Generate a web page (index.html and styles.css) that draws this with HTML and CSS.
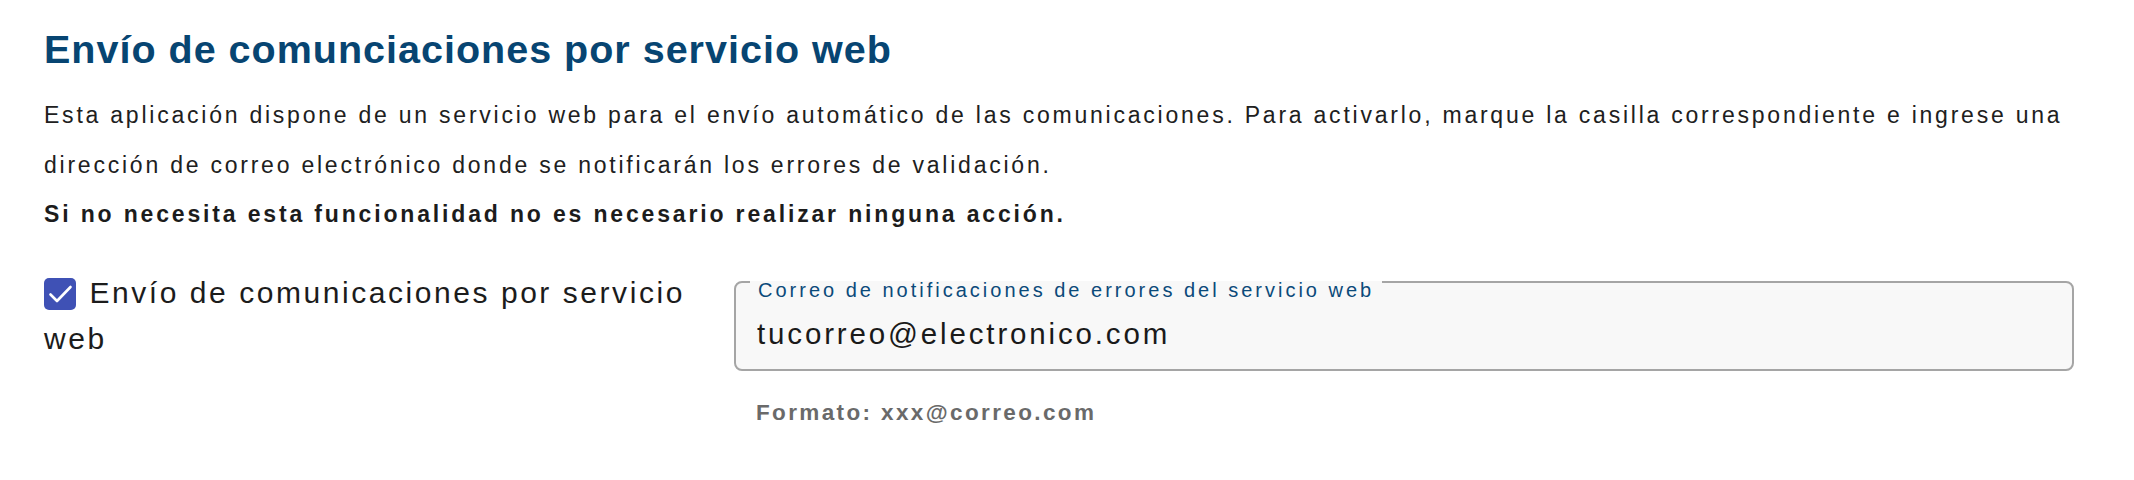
FILE: index.html
```html
<!DOCTYPE html>
<html lang="es">
<head>
<meta charset="utf-8">
<title>Envío de comunicaciones por servicio web</title>
<link rel="stylesheet" href="styles.css">
</head>
<body>
<main class="page">
  <h2 class="title">Envío de comunciaciones por servicio web</h2>
  <p class="intro">Esta aplicación dispone de un servicio web para el envío automático de las comunicaciones. Para activarlo, marque la casilla correspondiente e ingrese una dirección de correo electrónico donde se notificarán los errores de validación.</p>
  <p class="intro intro-strong">Si no necesita esta funcionalidad no es necesario realizar ninguna acción.</p>

  <section class="setting">
    <label class="check-label"><span class="checkbox" role="checkbox" aria-checked="true"><svg viewBox="0 0 32 32" width="32" height="32" aria-hidden="true"><path d="M6.5 16.5 L13 23 L26.5 9" fill="none" stroke="#ffffff" stroke-width="2.6" stroke-linecap="round" stroke-linejoin="round"/></svg></span>Envío de comunicaciones por servicio web</label>

    <div class="field-col">
      <fieldset class="field">
        <legend class="field-legend">Correo de notificaciones de errores del servicio web</legend>
        <input class="field-input" type="email" value="tucorreo@electronico.com">
      </fieldset>
      <div class="hint">Formato: xxx@correo.com</div>
    </div>
  </section>
</main>
</body>
</html>
```
FILE: styles.css
```css
html, body {
  margin: 0;
  padding: 0;
  background: #ffffff;
}

.page {
  padding: 25px 60px 0 44px;
  font-family: "Liberation Sans", Arial, sans-serif;
  color: #222222;
}

.title {
  margin: 0;
  font-size: 39.5px;
  line-height: 48px;
  font-weight: 700;
  letter-spacing: 1px;
  color: #074572;
}

.intro {
  margin: 0;
  font-size: 23px;
  line-height: 49.5px;
  letter-spacing: 2.77px;
  color: #202020;
}

.title + .intro {
  margin-top: 18px;
}

.intro-strong {
  font-weight: 700;
  letter-spacing: 2.84px;
  color: #1c1c1c;
}

.setting {
  display: grid;
  grid-template-columns: 660px 1fr;
  column-gap: 30px;
  margin-top: 23.5px;
  align-items: start;
}

.check-label {
  display: block;
  padding-top: 7px;
  font-size: 30px;
  line-height: 46px;
  letter-spacing: 2.55px;
  color: #1c1c1c;
}

.checkbox {
  display: inline-block;
  width: 32px;
  height: 32px;
  margin-left: -0.5px;
  margin-right: 14px;
  border-radius: 5px;
  background: #3f51b5;
  vertical-align: middle;
  position: relative;
  top: -1px;
}

.checkbox svg {
  display: block;
}

.field-col {
  min-width: 0;
}

.field {
  margin: 0;
  min-width: 0;
  border: 2px solid #a5a5a5;
  border-radius: 8px;
  background: #f8f8f8;
  padding: 16px 21px 18px;
}

.field-legend {
  margin-left: -7px;
  padding: 16px 8px 0;
  font-size: 20px;
  line-height: 22px;
  letter-spacing: 3px;
  color: #0b4a7a;
}

.field-input {
  display: block;
  width: 100%;
  height: 34px;
  margin: 0;
  padding: 0;
  border: 0;
  outline: none;
  background: transparent;
  font-family: "Liberation Sans", Arial, sans-serif;
  font-size: 29.5px;
  letter-spacing: 2.85px;
  color: #1a1a1a;
}

.hint {
  margin-top: 29px;
  padding-left: 22px;
  font-size: 22.5px;
  line-height: 26px;
  font-weight: 700;
  letter-spacing: 2.37px;
  color: #6a6a6a;
}
```
